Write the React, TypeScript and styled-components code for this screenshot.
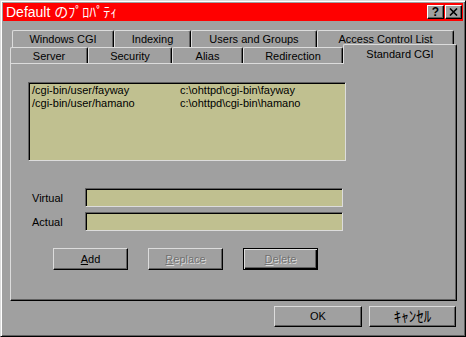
import React from "react";
import styled, { createGlobalStyle, css } from "styled-components";

const C = {
  face: "#a0a0a0",
  light: "#dcdcdc",
  white: "#ffffff",
  shadow: "#606060",
  dark: "#000000",
  field: "#c0c090",
  title: "#ff0000",
};

const FONT = `"Liberation Sans", "Noto Sans CJK JP", sans-serif`;

const GlobalStyle = createGlobalStyle`
  html, body { margin: 0; padding: 0; background: ${C.face}; }
  body { font-family: ${FONT}; font-size: 11px; color: #000; }
  * { box-sizing: border-box; }
`;

const Window = styled.div`
  width: 466px;
  height: 337px;
  display: flex;
  flex-direction: column;
  background: ${C.face};
  border: 1px solid;
  border-color: ${C.light} ${C.dark} ${C.dark} ${C.light};
  box-shadow: inset 1px 1px ${C.white}, inset -1px -1px ${C.shadow};
  padding: 2px;
`;

const TitleBar = styled.div`
  flex: none;
  height: 18px;
  background: ${C.title};
  display: flex;
  align-items: center;
  justify-content: space-between;
  padding: 0 1px 0 3px;
`;

const TitleText = styled.span`
  color: #fff;
  font-size: 14px;
  line-height: 18px;
  white-space: nowrap;
`;

const CaptionButtons = styled.div`
  display: flex;
  gap: 1px;
`;

const CaptionButton = styled.div`
  width: 17px;
  height: 14px;
  display: flex;
  align-items: center;
  justify-content: center;
  background: ${C.face};
  border: 1px solid;
  border-color: ${C.white} ${C.dark} ${C.dark} ${C.white};
  box-shadow: inset -1px -1px ${C.shadow};
  font: bold 12px ${FONT};
  color: #000;
  line-height: 12px;
`;

const Body = styled.div`
  flex: 1;
  display: flex;
  flex-direction: column;
  padding: 9px 6px 0 7px;
`;

const TabStrip = styled.div`
  display: flex;
  flex-direction: column;
`;

const TabRow = styled.div<{ $indent: number; $h: number }>`
  display: flex;
  align-items: flex-end;
  height: ${(p) => p.$h}px;
  padding-left: ${(p) => p.$indent}px;
`;

const Tab = styled.div<{ $w: number; $h: number; $active?: boolean }>`
  flex: none;
  width: ${(p) => p.$w}px;
  height: ${(p) => p.$h}px;
  display: flex;
  align-items: center;
  justify-content: center;
  background: ${C.face};
  border-top: 1px solid ${C.light};
  border-left: 1px solid ${C.light};
  border-right: 1px solid ${C.dark};
  border-radius: 2px 2px 0 0;
  box-shadow: inset -1px 0 ${C.shadow};
  white-space: nowrap;
  font-size: 11px;
  ${(p) =>
    p.$active &&
    css`
      position: relative;
      z-index: 1;
      margin-bottom: -1px;
      padding-bottom: 1px;
    `}
`;

const Panel = styled.div`
  flex: none;
  height: 238px;
  display: flex;
  flex-direction: column;
  border: 1px solid;
  border-color: ${C.light} ${C.dark} ${C.dark} ${C.light};
  box-shadow: inset -1px -1px ${C.shadow};
  padding: 18px 0 0 17px;
`;

const ListBox = styled.div`
  width: 318px;
  height: 79px;
  background: ${C.field};
  border: 1px solid;
  border-color: ${C.shadow} ${C.light} ${C.light} ${C.shadow};
  box-shadow: inset 1px 1px ${C.dark};
  padding: 1px 0 0 3px;
`;

const ListRow = styled.div`
  display: grid;
  grid-template-columns: 148px auto;
  line-height: 13px;
  white-space: nowrap;
`;

const Form = styled.div`
  margin-top: 27px;
  display: flex;
  flex-direction: column;
  gap: 5px;
`;

const FieldRow = styled.div`
  display: flex;
  align-items: center;
  height: 19px;
  padding-left: 4px;
`;

const Label = styled.label`
  width: 53px;
  flex: none;
`;

const TextField = styled.input`
  width: 258px;
  height: 19px;
  margin: 0;
  padding: 0 3px;
  background: ${C.field};
  border: 1px solid;
  border-color: ${C.shadow} ${C.light} ${C.light} ${C.shadow};
  box-shadow: inset 1px 1px ${C.dark};
  outline: none;
  font: 11px ${FONT};
`;

const ButtonRow = styled.div`
  margin-top: 17px;
  padding-left: 25px;
  display: flex;
  gap: 20px;
`;

const PushButton = styled.button<{ $w?: number; $h?: number; $default?: boolean; $fs?: number }>`
  width: ${(p) => p.$w ?? 75}px;
  height: ${(p) => p.$h ?? 22}px;
  margin: 0;
  padding: 0;
  background: ${C.face};
  border: 1px solid;
  border-color: ${C.light} ${C.dark} ${C.dark} ${C.light};
  box-shadow: inset -1px -1px ${C.shadow};
  font-family: ${FONT};
  font-size: ${(p) => p.$fs ?? 11}px;
  line-height: 1;
  color: #000;
  ${(p) =>
    p.$default &&
    css`
      border-color: ${C.dark};
      box-shadow: inset 1px 1px ${C.light}, inset -1px -1px ${C.dark},
        inset -2px -2px ${C.shadow};
    `}
  &:disabled {
    color: #727272;
    text-shadow: 1px 1px ${C.light};
  }
`;

const Footer = styled.div`
  display: flex;
  justify-content: flex-end;
  gap: 7px;
  padding: 5px 1px 0 0;
`;

const row1 = [
  { label: "Windows CGI", w: 102 },
  { label: "Indexing", w: 77 },
  { label: "Users and Groups", w: 126 },
  { label: "Access Control List", w: 137 },
];

const row2 = [
  { label: "Server", w: 78 },
  { label: "Security", w: 84 },
  { label: "Alias", w: 71 },
  { label: "Redirection", w: 100 },
  { label: "Standard CGI", w: 114, active: true },
];

const mappings = [
  ["/cgi-bin/user/fayway", "c:\\ohttpd\\cgi-bin\\fayway"],
  ["/cgi-bin/user/hamano", "c:\\ohttpd\\cgi-bin\\hamano"],
];

export default function App() {
  return (
    <>
      <GlobalStyle />
      <Window>
        <TitleBar>
          <TitleText>Default のﾌﾟﾛﾊﾟﾃｨ</TitleText>
          <CaptionButtons>
            <CaptionButton>?</CaptionButton>
            <CaptionButton>
              <svg width="9" height="8" viewBox="0 0 9 8">
                <path d="M1 0.5 L8 7.5 M8 0.5 L1 7.5" stroke="#000" strokeWidth="1.6" />
              </svg>
            </CaptionButton>
          </CaptionButtons>
        </TitleBar>
        <Body>
          <TabStrip>
            <TabRow $indent={2} $h={17}>
              {row1.map((t) => (
                <Tab key={t.label} $w={t.w} $h={17}>
                  {t.label}
                </Tab>
              ))}
            </TabRow>
            <TabRow $indent={0} $h={16}>
              {row2.map((t) => (
                <Tab key={t.label} $w={t.w} $h={t.active ? 20 : 16} $active={t.active}>
                  {t.label}
                </Tab>
              ))}
            </TabRow>
          </TabStrip>
          <Panel>
            <ListBox>
              {mappings.map(([v, a]) => (
                <ListRow key={v}>
                  <span>{v}</span>
                  <span>{a}</span>
                </ListRow>
              ))}
            </ListBox>
            <Form>
              <FieldRow>
                <Label>Virtual</Label>
                <TextField readOnly value="" />
              </FieldRow>
              <FieldRow>
                <Label>Actual</Label>
                <TextField readOnly value="" />
              </FieldRow>
            </Form>
            <ButtonRow>
              <PushButton>
                <u>A</u>dd
              </PushButton>
              <PushButton disabled>
                <u>R</u>eplace
              </PushButton>
              <PushButton disabled $default>
                <u>D</u>elete
              </PushButton>
            </ButtonRow>
          </Panel>
          <Footer>
            <PushButton $w={88} $h={21}>
              OK
            </PushButton>
            <PushButton $w={87} $h={21} $fs={15}>
              ｷｬﾝｾﾙ
            </PushButton>
          </Footer>
        </Body>
      </Window>
    </>
  );
}
